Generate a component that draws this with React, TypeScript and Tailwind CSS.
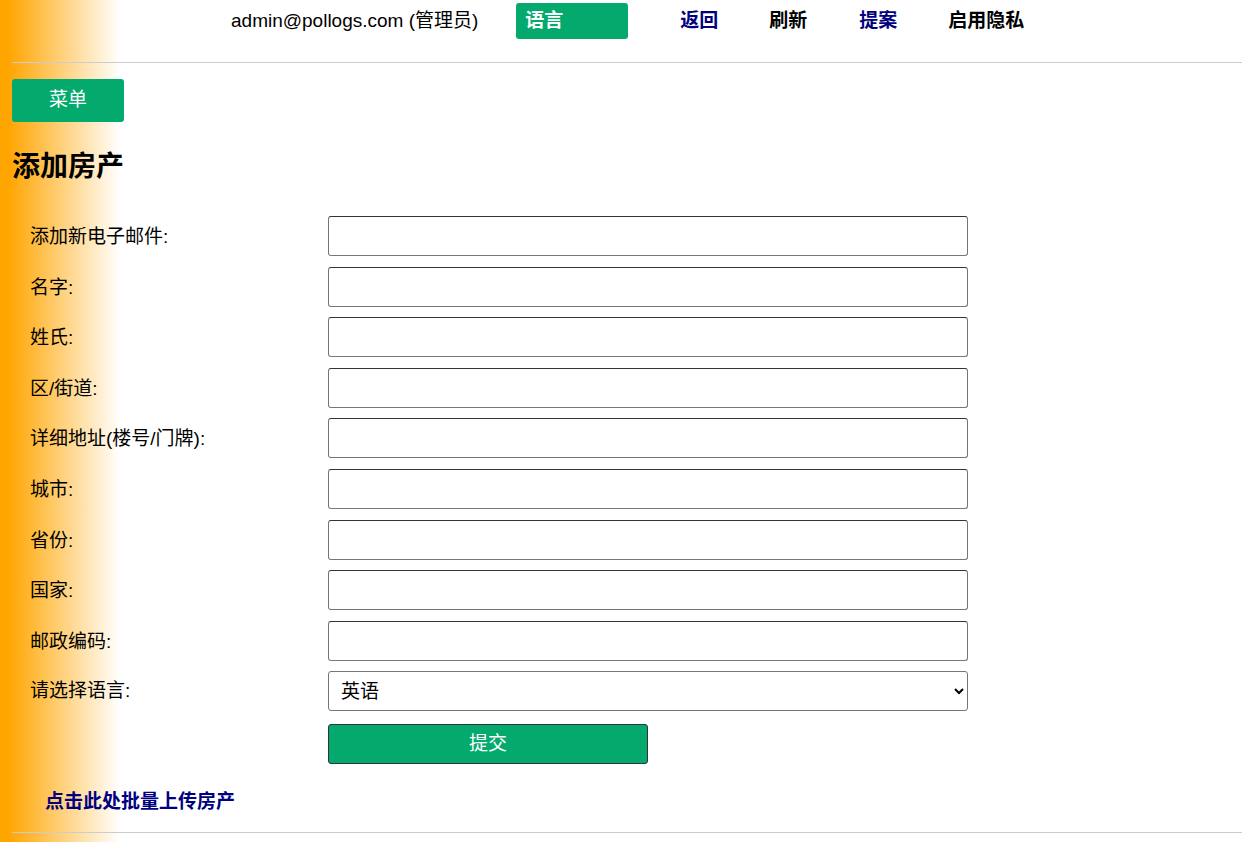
const fields = [
  "添加新电子邮件:",
  "名字:",
  "姓氏:",
  "区/街道:",
  "详细地址(楼号/门牌):",
  "城市:",
  "省份:",
  "国家:",
  "邮政编码:",
];

const font = "font-['Liberation_Sans','Noto_Sans_CJK_SC',sans-serif]";

export default function App() {
  return (
    <div
      className={`${font} min-h-[842px] bg-[linear-gradient(to_right,#ffa500_8px,#ffffff_120px)] pl-3 text-[19px] text-black`}
    >
      <header className="flex h-[63px] items-start border-b border-[#cccccc] pt-[3px]">
        <span className="ml-[219px] mt-[6px] leading-[24px]">admin@pollogs.com (管理员)</span>
        <button className="ml-[38px] h-9 w-[112px] rounded-[3px] bg-[#04aa6d] pl-[9px] text-left font-bold text-white">
          语言
        </button>
        <nav className="ml-[52px] mt-[6px] flex font-bold leading-[24px]">
          <a className="w-[89px] text-[#000080]">返回</a>
          <a className="w-[90px]">刷新</a>
          <a className="w-[89px] text-[#000080]">提案</a>
          <a>启用隐私</a>
        </nav>
      </header>

      <button className="mt-4 h-[43px] w-[112px] rounded-[3px] bg-[#04aa6d] text-white">菜单</button>

      <h2 className="mt-[28px] text-[28px] font-bold leading-[33px]">添加房产</h2>

      <form className="mt-[33px] flex flex-col" onSubmit={(e) => e.preventDefault()}>
        {fields.map((label) => (
          <div key={label} className="flex h-[50.6px] items-start">
            <label className="w-[316px] pl-[18px] pt-[9px] leading-[24px]">{label}</label>
            <input
              type="text"
              className="h-10 w-[640px] rounded-[3px] border border-[#767676] border-t-[#333333] bg-white px-2 outline-none"
            />
          </div>
        ))}
        <div className="flex h-[53px] items-start">
          <label className="w-[316px] pl-[18px] pt-[8px] leading-[24px]">请选择语言:</label>
          <select className="h-10 w-[640px] rounded-[3px] border border-[#767676] bg-white px-2 outline-none">
            <option>英语</option>
            <option>中文</option>
          </select>
        </div>
        <div className="pl-[316px]">
          <button
            type="submit"
            className="h-10 w-[320px] rounded-[3px] border border-[#333333] bg-[#04aa6d] text-white"
          >
            提交
          </button>
        </div>
      </form>

      <a className="mt-[26px] block pl-[33px] font-bold leading-[24px] text-[#000080]">点击此处批量上传房产</a>

      <hr className="mt-[18px] border-[#cccccc]" />
    </div>
  );
}
